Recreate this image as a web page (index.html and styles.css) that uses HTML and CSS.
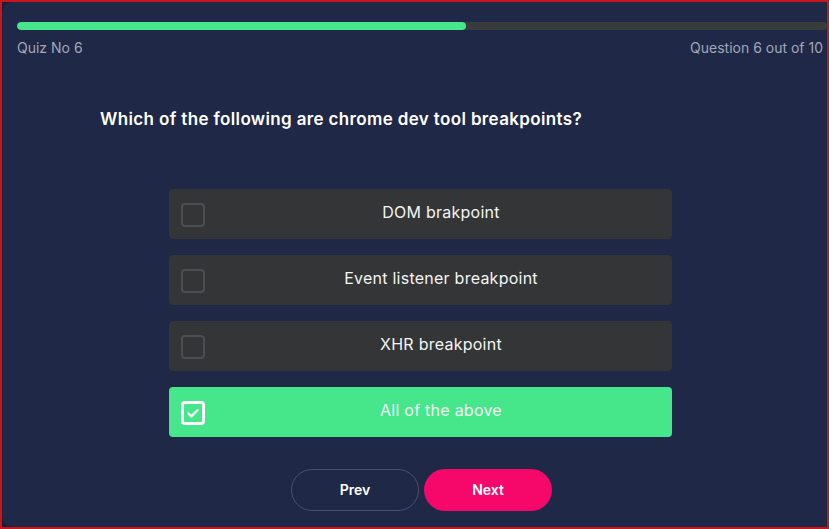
FILE: index.html
```html
<!DOCTYPE html>
<html>
<head>
<meta charset="utf-8">
<link rel="stylesheet" href="styles.css">
</head>
<body>
<div class="frame">
  <div class="card">
    <div class="progress"><div class="progress-fill" style="width:449px"></div></div>
    <div class="meta">
      <span>Quiz No 6</span>
      <span>Question 6 out of 10</span>
    </div>
    <h1 class="question">Which of the following are chrome dev tool breakpoints?</h1>
    <div class="options">
      <div class="option"><span class="box"></span><span class="label">DOM brakpoint</span></div>
      <div class="option"><span class="box"></span><span class="label">Event listener breakpoint</span></div>
      <div class="option"><span class="box"></span><span class="label">XHR breakpoint</span></div>
      <div class="option selected"><span class="box"><svg viewBox="0 0 24 24" width="16" height="16"><path d="M5 12.5l4.5 4.5L19 7.5" fill="none" stroke="#fff" stroke-width="3.4" stroke-linecap="round" stroke-linejoin="round"/></svg></span><span class="label">All of the above</span></div>
    </div>
    <div class="actions">
      <button class="btn prev">Prev</button>
      <button class="btn next">Next</button>
    </div>
  </div>
</div>
</body>
</html>
```
FILE: styles.css
```css
html, body {
  margin: 0;
  padding: 0;
}
body {
  font-family: "Inter", "Noto Sans", sans-serif;
  background: #1f2846;
}
.frame {
  width: 829px;
  height: 529px;
  box-sizing: border-box;
  border: 2px solid #c9161d;
  background: #1a1a3c;
  overflow: hidden;
}
.card {
  height: 100%;
  box-sizing: border-box;
  background: #1f2846;
  border-radius: 10px 0 0 10px;
  padding: 20px 0 0 15px;
  display: flex;
  flex-direction: column;
}
.progress {
  height: 8px;
  background: #383c3c;
  border-radius: 4px;
  overflow: hidden;
}
.progress-fill {
  height: 100%;
  background: #46e68b;
  border-radius: 4px;
}
.meta {
  display: flex;
  justify-content: space-between;
  margin-top: 8px;
  padding-right: 4px;
  font-size: 14px;
  line-height: 20px;
  color: #a2a7b9;
}
.question {
  margin: 49px 0 0 83px;
  font-size: 17px;
  line-height: 24px;
  font-weight: 600;
  color: #ffffff;
  letter-spacing: 0.36px;
}
.options {
  margin: 58px 0 0 152px;
  width: 503px;
  display: flex;
  flex-direction: column;
  gap: 16px;
}
.option {
  height: 50px;
  box-sizing: border-box;
  padding: 0 0 0 12px;
  background: #333537;
  border-radius: 4px;
  display: flex;
  align-items: center;
}
.box {
  flex: none;
  width: 24px;
  height: 24px;
  margin-top: 2px;
  box-sizing: border-box;
  border: 2px solid #4c4f52;
  border-radius: 4px;
  display: flex;
  align-items: center;
  justify-content: center;
}
.label {
  flex: 1;
  margin-left: 5px;
  padding-bottom: 4px;
  text-align: center;
  font-size: 16px;
  color: #f3f4f6;
  letter-spacing: 0.25px;
}
.option.selected {
  background: #46e68b;
}
.option.selected .box {
  border: 3px solid #ffffff;
}
.actions {
  margin: 32px 0 0 274px;
  display: flex;
  gap: 5px;
}
.btn {
  width: 128px;
  height: 42px;
  border-radius: 21px;
  font-family: "Inter", sans-serif;
  font-size: 14px;
  font-weight: 600;
  color: #ffffff;
  padding: 0 0 2px;
  cursor: pointer;
}
.prev {
  background: transparent;
  border: 1px solid #4b5169;
}
.next {
  background: #f5086a;
  border: none;
}
```
